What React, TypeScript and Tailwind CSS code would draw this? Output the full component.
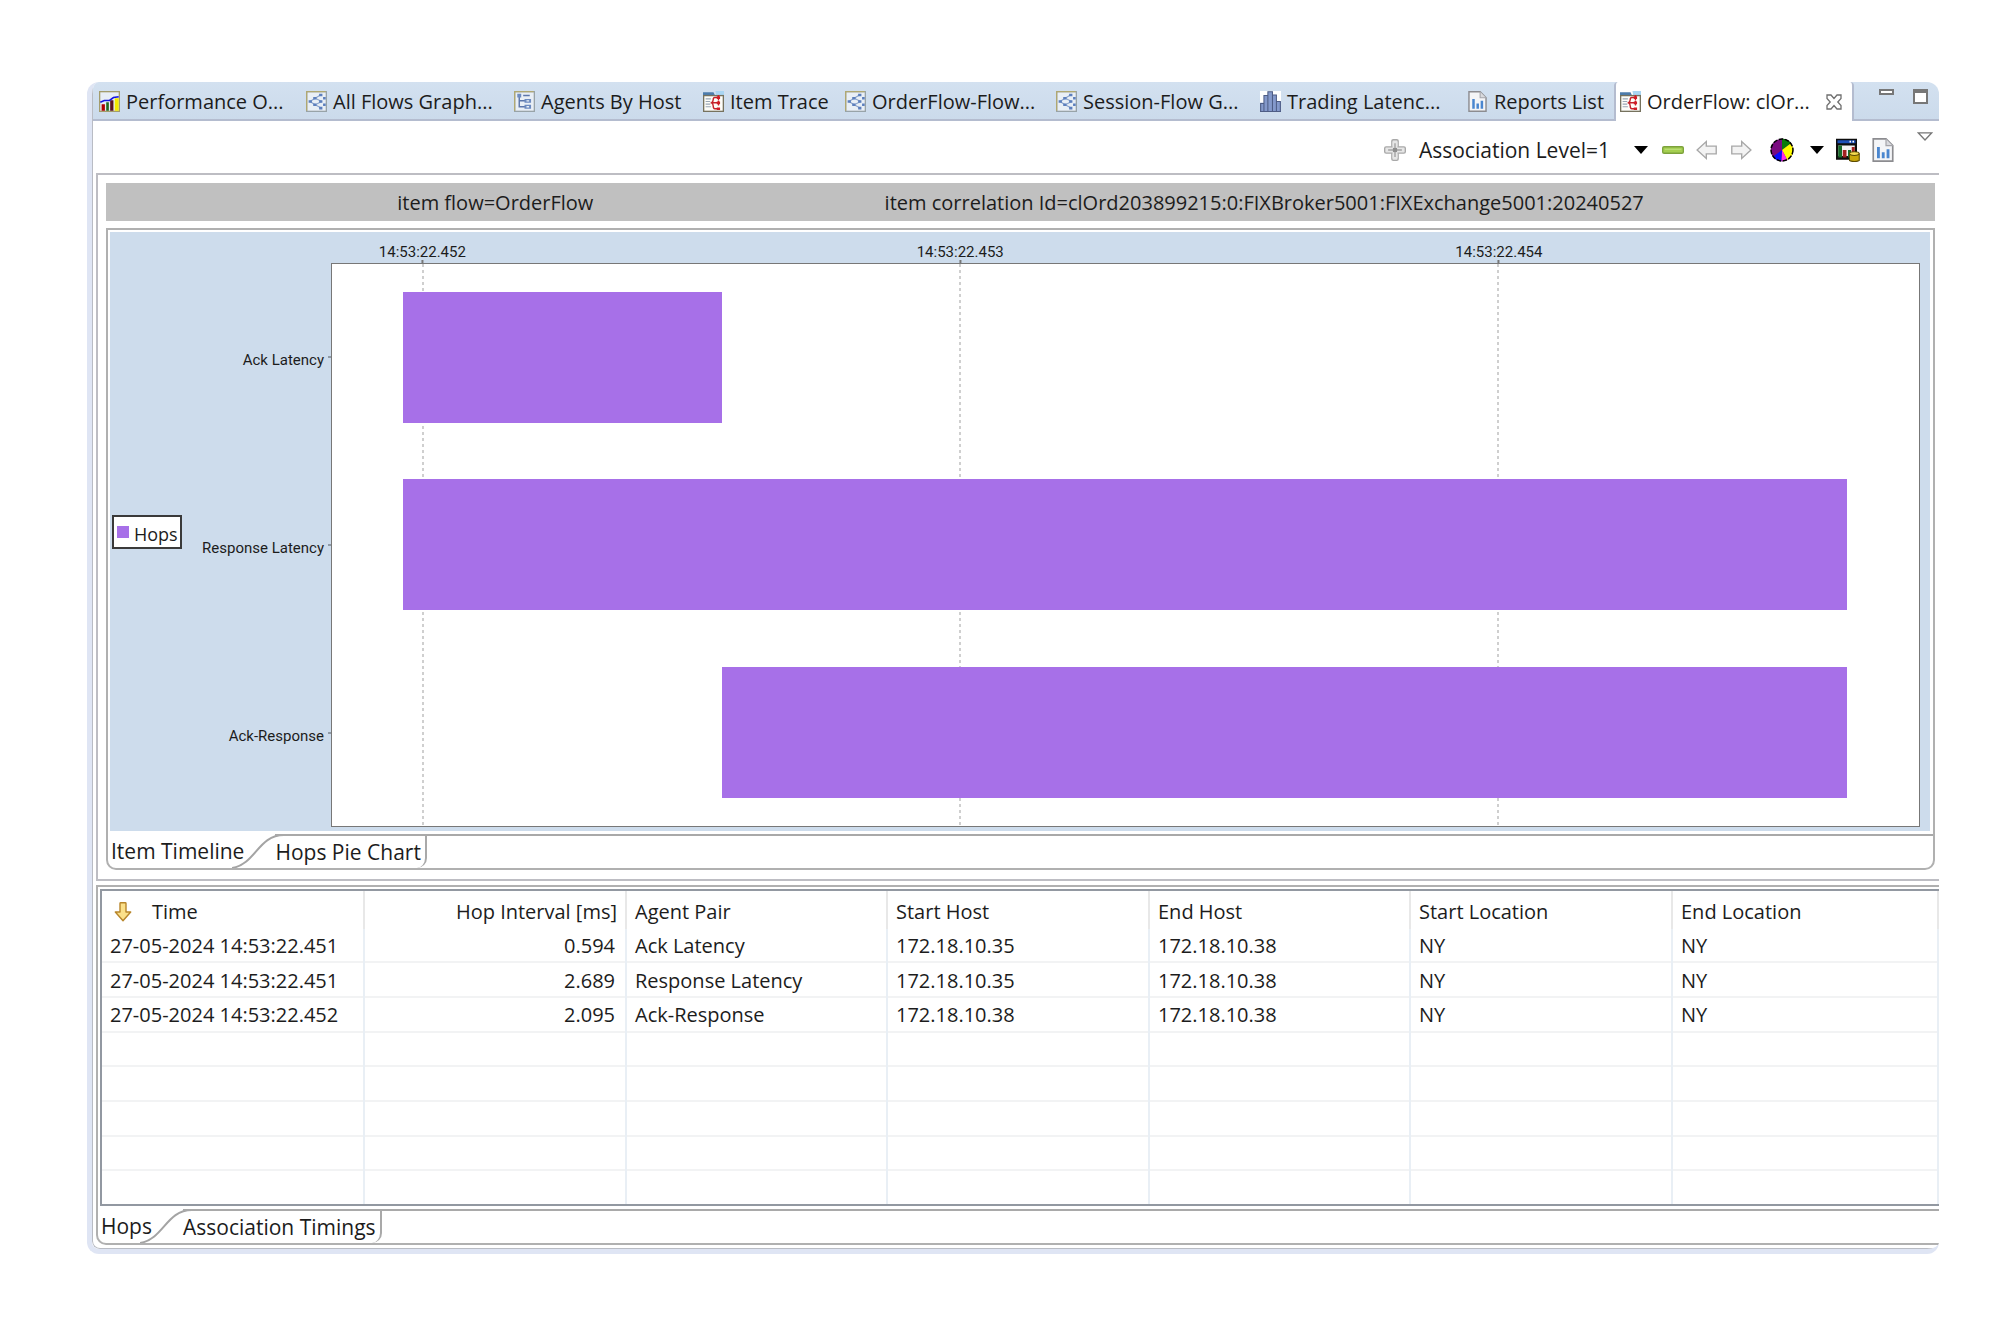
import React, { useState } from 'react';

type IconProps = { className?: string };

const PerformanceIcon: React.FC<IconProps> = ({ className }) => (
  <svg viewBox="0 0 16 16" className={className}>
    <rect x="0.5" y="0.5" width="15" height="15" fill="#e8eef6" stroke="#a39c6c" />
    <path d="M2 10h2.5v5H2z" fill="#b00000" />
    <path d="M5.5 8.5h2v6.5h-2z" fill="#1f6a1f" />
    <path d="M8.5 7H11v8H8.5z" fill="#5a1020" />
    <path d="M12 5.5h3V15h-3z" fill="#f4e800" />
    <path d="M1 8.5L4 7.2h4L11 5l4-.6" fill="none" stroke="#1414e0" strokeWidth="1.2" />
  </svg>
);

const FlowGraphIcon: React.FC<IconProps> = ({ className }) => (
  <svg viewBox="0 0 16 16" className={className}>
    <rect x="0.5" y="0.5" width="15" height="15" fill="#e9eff6" stroke="#98a3a8" />
    <path d="M0.5 15V0.5H15" fill="none" stroke="#b0a872" />
    <path d="M3 8l4-2.5L11 3M3 8l4 2.5 4.5 2.5M7 5.5L12 8M7 10.5L12 8" fill="none" stroke="#8ba3cb" strokeWidth="0.8" />
    <path
      d="M2 7h2.5v2H2zM5.5 4.5H8v2H5.5zM5.5 9.5H8v2H5.5zM10 2h2.5v2H10zM10 7h2.5v2H10zM10 12h2.5v2H10zM13 4.5h2v2h-2zM13 9.5h2v2h-2z"
      fill="#5c7fbd"
    />
  </svg>
);

const HostTreeIcon: React.FC<IconProps> = ({ className }) => (
  <svg viewBox="0 0 16 16" className={className}>
    <rect x="0.5" y="0.5" width="15" height="15" fill="#e9eff6" stroke="#98a3a8" />
    <path d="M0.5 15V0.5H15" fill="none" stroke="#b0a872" />
    <path d="M4 4v8h5M4 7.5h5M7 3.5h5" fill="none" stroke="#5c76aa" strokeWidth="1.1" />
    <path d="M2.5 2h3v3h-3zM8 6h5v3H8zM8 10.5h5v3H8z" fill="#6d8bc0" />
    <path d="M9.5 7h2v1h-2zM9.5 11.5h2v1h-2z" fill="#e9eff6" />
  </svg>
);

const TraceIcon: React.FC<IconProps> = ({ className }) => (
  <svg viewBox="0 0 16 16" className={className}>
    <path d="M0 1h8l1 2h7v13H0z" fill="#4d7cab" />
    <path d="M9.5 0H16v3h-6z" fill="#a9d5f2" />
    <rect x="0.5" y="3.5" width="15" height="12" fill="#fdfdf8" stroke="#76725e" />
    <path d="M2 6h4M2 8h3.5M2 10h3.5M2 12h4" stroke="#9aa7b5" strokeWidth="0.9" />
    <path d="M12 5H9q-1.200 0-1.200 1.500T6.500 9Q7.800 9.500 7.800 11.500T9 13.500h3M7 9h5" fill="none" stroke="#c5222a" strokeWidth="1.1" />
    <path d="M10.500 4h2.500v2h-2.500zM10.500 8h2.500v2h-2.500zM10.500 12.500h2.500v2h-2.500zM11.300 3h1v4h-1zM11.300 7.500h1v3.500h-1z" fill="#cf1d26" />
  </svg>
);

const HistogramIcon: React.FC<IconProps> = ({ className }) => (
  <svg viewBox="0 0 16 16" className={className}>
    <rect width="16" height="16" fill="#fff" />
    <path d="M0 9h3V3h3V0.5h3.5V3h3v5H16v8H0z" fill="#8499cb" />
    <path
      d="M0.5 16V9.500H3V3.5h3v-3h3.5V3h3v5h3v8M3 9v7M6 3v13M9.5 3v13M12.5 8v8M0 15.6h16"
      fill="none"
      stroke="#4e5d85"
      strokeWidth="0.8"
    />
  </svg>
);

const ReportIcon: React.FC<IconProps> = ({ className }) => (
  <svg viewBox="0 0 16 16" className={className}>
    <path d="M1.500 0.600H10l4.500 4.500v10.300h-13z" fill="#f4f5f7" stroke="#8c8c90" strokeWidth="1.1" />
    <path d="M10 0.600v4.500h4.500" fill="#d9dade" stroke="#a5a5aa" strokeWidth="0.8" />
    <path d="M4 6h1.900v7.500H4zM7.200 9.500h1.900v4H7.200zM10.400 7.500h1.900v6h-1.900z" fill="#4a86cf" />
  </svg>
);

const CloseIcon: React.FC<IconProps> = ({ className }) => (
  <svg viewBox="0 0 16 16" className={className}>
    <path
      d="M1 1h4l3 3.500L11 1h4v3.500L11.800 8l3.200 3.500V15h-4l-3-3.500L5 15H1v-3.500L4.200 8 1 4.500z"
      fill="#fff"
      stroke="#6f6f6f"
      strokeWidth="1.3"
    />
  </svg>
);

const AddIcon: React.FC<IconProps> = ({ className }) => (
  <svg viewBox="0 0 16 16" className={className}>
    <rect x="5.700" y="0.500" width="4.600" height="15" rx="1" fill="#e6e6e6" stroke="#a9a9a9" />
    <rect x="0.500" y="5.700" width="15" height="4.600" rx="1" fill="#e6e6e6" stroke="#a9a9a9" />
    <path d="M6.200 2h3.600v12H6.200z" fill="#e6e6e6" />
    <path d="M8 3v10M3 8h10" stroke="#a2a2a2" />
    <rect x="6.500" y="6.500" width="3" height="3" fill="#8f8f8f" />
  </svg>
);

const RemoveIcon: React.FC<IconProps> = ({ className }) => (
  <svg viewBox="0 0 16 16" className={className}>
    <rect x="0.5" y="5.600" width="15" height="4.800" rx="1" fill="#a5cf50" stroke="#7da23c" />
    <path d="M2 7.500h12" stroke="#b9dc74" />
  </svg>
);

const ArrowIcon: React.FC<IconProps> = ({ className }) => (
  <svg viewBox="0 0 16 16" className={className}>
    <path d="M0.800 8l6.700-6.200v3.400h7.200v5.600H7.500v3.400z" fill="#f3f3f3" stroke="#a8a8a8" />
  </svg>
);

const PieIcon: React.FC<IconProps> = ({ className }) => (
  <svg viewBox="0 0 16 16" className={className}>
    <circle cx="8" cy="8" r="7.500" fill="#7a0a80" />
    <path d="M8 8V0.500a7.500 7.500 0 0 1 6 3z" fill="#0a7d0a" />
    <path d="M8 8l6-4.500a7.500 7.500 0 0 1-2.500 11.100z" fill="#ffff00" />
    <path d="M8 8l3.500 6.600a7.500 7.500 0 0 1-4 .9z" fill="#ff2ce8" />
    <path d="M8 8l-.5 7.500a7.500 7.500 0 0 1-5.500-3z" fill="#0c0cff" />
    <circle cx="8" cy="8" r="7.300" fill="none" stroke="#000" strokeDasharray="3 1" />
  </svg>
);

const ChartDbIcon: React.FC<IconProps> = ({ className }) => (
  <svg viewBox="0 0 16 16" className={className}>
    <rect y="0.500" width="14" height="14" fill="#0d0d0d" />
    <rect x="1" y="1.500" width="12" height="2" fill="#1c50b8" />
    <path d="M9 1.800h1V3H9zM11 1.800h1V3h-1z" fill="#fff" />
    <path d="M1.500 5h11v7h-11z" fill="#f3f3f3" />
    <path d="M1.500 5H4v8H1.500zM8 8h2v5H8z" fill="#186a2a" />
    <path d="M4.500 8H7v5H4.500zM10.500 6h2v5h-2z" fill="#a32020" />
    <path d="M9 10.500h6.500V15q-3.200 1.500-6.500 0z" fill="#c9a80c" stroke="#5d4c00" strokeWidth="0.7" />
    <ellipse cx="12.200" cy="10.400" rx="3.200" ry="1.200" fill="#f4dc50" stroke="#5d4c00" strokeWidth="0.7" />
  </svg>
);

const SortIcon: React.FC<IconProps> = ({ className }) => (
  <svg viewBox="0 0 18 20" className={className}>
    <path
      d="M6 1.500q0-.7.7-.7h4.600q.7 0 .7.700V10h4.700L9 18.800 1.300 10H6z"
      fill="#fbe08a"
      stroke="#b8862b"
      strokeWidth="1.4"
      strokeLinejoin="round"
    />
  </svg>
);

const Caret: React.FC = () => (
  <svg viewBox="0 0 14 8" className="w-[14px] h-2">
    <path d="M0 0h14L7 8z" fill="#000" />
  </svg>
);

const editorTabs = [
  { label: 'Performance O...', Icon: PerformanceIcon, width: 'w-[207px]' },
  { label: 'All Flows Graph...', Icon: FlowGraphIcon, width: 'w-[208px]' },
  { label: 'Agents By Host', Icon: HostTreeIcon, width: 'w-[189px]' },
  { label: 'Item Trace', Icon: TraceIcon, width: 'w-[142px]' },
  { label: 'OrderFlow-Flow...', Icon: FlowGraphIcon, width: 'w-[211px]' },
  { label: 'Session-Flow G...', Icon: FlowGraphIcon, width: 'w-[204px]' },
  { label: 'Trading Latenc...', Icon: HistogramIcon, width: 'w-[207px]' },
  { label: 'Reports List', Icon: ReportIcon, width: 'w-[147px]' },
];

// positions are percentages of the plot width
const ticks = [
  { label: '14:53:22.452', at: 5.75 },
  { label: '14:53:22.453', at: 39.6 },
  { label: '14:53:22.454', at: 73.5 },
];

const bars = [
  { label: 'Ack Latency', start: 4.45, end: 24.55 },
  { label: 'Response Latency', start: 4.45, end: 95.45 },
  { label: 'Ack-Response', start: 24.55, end: 95.45 },
];

const hops = [
  ['27-05-2024 14:53:22.451', '0.594', 'Ack Latency', '172.18.10.35', '172.18.10.38', 'NY', 'NY'],
  ['27-05-2024 14:53:22.451', '2.689', 'Response Latency', '172.18.10.35', '172.18.10.38', 'NY', 'NY'],
  ['27-05-2024 14:53:22.452', '2.095', 'Ack-Response', '172.18.10.38', '172.18.10.38', 'NY', 'NY'],
];

const columns = ['Time', 'Hop Interval [ms]', 'Agent Pair', 'Start Host', 'End Host', 'Start Location', 'End Location'];
const EMPTY_ROWS = 5;

const EditorTabs: React.FC = () => (
  <div className="h-[39px] flex bg-linear-to-b from-[#d3e1f0] to-[#cbdaeb]">
    <div className="flex items-center pl-[6px] pt-[2px] border-b-2 border-[#b4bccf]">
      {editorTabs.map(({ label, Icon, width }) => (
        <button key={label} className={`${width} h-full flex items-center gap-[6px] whitespace-nowrap`}>
          <Icon className="w-[21px] h-[21px] shrink-0" />
          {label}
        </button>
      ))}
    </div>
    <div className="w-[240px] shrink-0 flex items-center bg-white border-x-2 border-[#b4bccf] rounded-t-[4px] pl-[4px] pr-[10px]">
      <button className="flex-1 h-full flex items-center gap-[6px] whitespace-nowrap">
        <TraceIcon className="w-[21px] h-[21px] shrink-0" />
        OrderFlow: clOr...
      </button>
      <button aria-label="Close tab">
        <CloseIcon className="w-[16px] h-[16px]" />
      </button>
    </div>
    <div className="flex-1 flex justify-end items-start gap-[19px] pt-[7px] pr-[11px] border-b-2 border-[#b4bccf]">
      <button aria-label="Minimize" className="w-[15px] h-[6px] bg-white border-2 border-[#777]" />
      <button aria-label="Maximize" className="w-[15px] h-[15px] bg-white border-2 border-t-4 border-[#777]" />
    </div>
  </div>
);

const Toolbar: React.FC = () => (
  <div className="h-[52px] flex justify-end items-center pt-[5px] pr-[6px]">
    <button className="flex items-center gap-[13px] text-[21px] whitespace-nowrap">
      <AddIcon className="w-[22px] h-[22px]" />
      Association Level=1
    </button>
    <button aria-label="Association levels" className="ml-6 mr-[14px]">
      <Caret />
    </button>
    <button aria-label="Remove level" className="mr-3">
      <RemoveIcon className="w-[22px] h-[22px]" />
    </button>
    <button aria-label="Back" className="mr-3">
      <ArrowIcon className="w-[22px] h-[22px]" />
    </button>
    <button aria-label="Forward" className="mr-[18px]">
      <ArrowIcon className="w-[22px] h-[22px] rotate-180" />
    </button>
    <button aria-label="Chart type">
      <PieIcon className="w-6 h-6" />
    </button>
    <button aria-label="Chart types" className="ml-4 mr-3">
      <Caret />
    </button>
    <button aria-label="Chart data" className="mr-[11px]">
      <ChartDbIcon className="w-6 h-6" />
    </button>
    <button aria-label="Create report" className="mr-[22px]">
      <ReportIcon className="w-6 h-6" />
    </button>
    <button aria-label="View menu" className="self-start pt-[6px]">
      <svg viewBox="0 0 16 9" className="w-4 h-[9px]">
        <path d="M1.200 0.800h13.600L8 8z" fill="#fff" stroke="#777" strokeWidth="1.3" />
      </svg>
    </button>
  </div>
);

const Timeline: React.FC = () => (
  <div className="flex h-[599px] ml-[2px] mr-[3px] mt-[2px] mb-[3px] bg-[#cddcec] pr-[10px] pb-1 leading-4 font-['Roboto','Liberation_Sans',sans-serif] text-[15px]">
    <div className="w-[75px] flex items-center pl-[2px] pt-1">
      <div className="flex items-center gap-[5px] h-[34px] w-[70px] pl-[3px] bg-white border-2 border-[#3a3a3a] text-lg leading-5 font-['Open_Sans','Noto_Sans',sans-serif]">
        <span className="w-3 h-3 bg-[#a770e8]" />
        <span className="pt-1">Hops</span>
      </div>
    </div>
    <div className="w-[146px] flex flex-col pt-[31px]">
      {bars.map((bar) => (
        <div key={bar.label} className="flex-1 flex items-center justify-end gap-1 whitespace-nowrap">
          <span className="pt-[6px]">{bar.label}</span>
          <span className="w-[3px] h-[2px] bg-[#8f9aa6]" />
        </div>
      ))}
    </div>
    <div className="flex-1 flex flex-col">
      <div className="relative h-[31px] shrink-0">
        {ticks.map((tick) => (
          <div
            key={tick.label}
            className="absolute bottom-0 flex flex-col items-center -translate-x-1/2"
            style={{ left: `${tick.at}%` }}
          >
            {tick.label}
            <span className="w-[2px] h-[3px] bg-[#777]" />
          </div>
        ))}
      </div>
      <div className="relative flex-1 flex flex-col bg-white border border-[#777]">
        {ticks.map((tick) => (
          <div
            key={tick.label}
            className="absolute inset-y-0 w-[2px] -translate-x-1/2 bg-[repeating-linear-gradient(#cfcfcf_0_3px,transparent_3px_6px)]"
            style={{ left: `${tick.at}%` }}
          />
        ))}
        {bars.map((bar) => (
          <div key={bar.label} className="relative flex-1 flex items-center">
            <div
              className="h-[131px] bg-[#a770e8]"
              style={{ marginLeft: `${bar.start}%`, width: `${bar.end - bar.start}%` }}
            />
          </div>
        ))}
      </div>
    </div>
  </div>
);

interface BottomTabsProps {
  tabs: [string, string];
  active: number;
  onSelect: (index: number) => void;
}

const BottomTabs: React.FC<BottomTabsProps> = ({ tabs, active, onSelect }) => (
  <div role="tablist" className="flex h-[34px] text-[21px] whitespace-nowrap">
    <button role="tab" aria-selected={active === 0} className="pl-[3px]" onClick={() => onSelect(0)}>
      {tabs[0]}
    </button>
    <svg viewBox="0 0 52 34" className="w-[52px] h-[34px] -ml-[12px] -mr-[9px] shrink-0">
      <path d="M0 34C24 30 26 1 52 1" fill="none" stroke="#a4a4a4" strokeWidth="2" />
    </svg>
    <button
      role="tab"
      aria-selected={active === 1}
      className="pr-1 border-t-2 border-r-2 border-[#a9a9a9] rounded-br-[10px]"
      onClick={() => onSelect(1)}
    >
      {tabs[1]}
    </button>
    <div className="flex-1 border-t-2 border-[#a9a9a9]" />
  </div>
);

const HopsTable: React.FC = () => (
  <div className="ml-[2px] mt-[2px] mb-[3px] border-2 border-r-0 border-[#9298a1]">
    <table className="w-full h-[313px] table-fixed border-collapse text-left whitespace-nowrap">
      <colgroup>
        <col className="w-[262px]" />
        <col className="w-[262px]" />
        <col className="w-[261px]" />
        <col className="w-[262px]" />
        <col className="w-[261px]" />
        <col className="w-[262px]" />
        <col />
      </colgroup>
      <thead>
        <tr className="h-[38px]">
          {columns.map((column, i) => (
            <th
              key={column}
              className={`font-normal pt-[3px] px-2 border-r-2 border-[#e8e8e8] ${i === 1 ? 'text-right' : ''}`}
            >
              {i === 0 ? (
                <span className="flex items-center gap-5 pl-1">
                  <SortIcon className="w-[18px] h-5" />
                  {column}
                </span>
              ) : (
                column
              )}
            </th>
          ))}
        </tr>
      </thead>
      <tbody>
        {hops.map((hop, row) => (
          <tr key={row} className="border-b-2 border-[#f2f3f4]">
            {hop.map((value, i) => (
              <td
                key={i}
                className={`pt-[2px] border-r-2 border-r-[#e9eff5] ${i === 1 ? 'pr-[10px] text-right' : 'px-2'}`}
              >
                {value}
              </td>
            ))}
          </tr>
        ))}
        {Array.from({ length: EMPTY_ROWS }, (_, row) => (
          <tr key={row} className="border-b-2 border-[#f2f3f4] last:border-b-0">
            {columns.map((column) => (
              <td key={column} className="pt-[2px] border-r-2 border-r-[#e9eff5]">
                &nbsp;
              </td>
            ))}
          </tr>
        ))}
      </tbody>
    </table>
  </div>
);

export default function App() {
  const [chartTab, setChartTab] = useState(0);
  const [tableTab, setTableTab] = useState(0);

  return (
    <div className="min-h-screen bg-white pt-[82px] pl-[87px] pr-[61px] text-[20px] leading-6 text-[#1c1c1c] font-['Open_Sans','Noto_Sans',sans-serif]">
      <div className="border-l-[5px] border-b-[5px] border-[#dfe5f4] rounded-[12px] overflow-hidden">
        <div className="border-l border-b border-[#b9bcc4] rounded-bl-[8px]">
          <EditorTabs />
          <Toolbar />
          <div className="ml-[3px] mb-[3px]">
            <div className="border-2 border-r-0 border-[#bdbdc3] pt-2 pl-2 pr-1 pb-[9px]">
              <div className="h-[38px] flex items-center justify-evenly pt-[2px] bg-[#c0c0c0] whitespace-nowrap">
                <span>item flow=OrderFlow</span>
                <span>item correlation Id=clOrd203899215:0:FIXBroker5001:FIXExchange5001:20240527</span>
              </div>
              <div className="mt-[7px] border-2 border-[#b0b0b0] rounded-b-[10px]">
                <Timeline />
                <BottomTabs tabs={['Item Timeline', 'Hops Pie Chart']} active={chartTab} onSelect={setChartTab} />
              </div>
            </div>
            <div className="mt-1 border-2 border-r-0 border-[#b0b0b0] rounded-bl-[10px]">
              <HopsTable />
              <BottomTabs tabs={['Hops', 'Association Timings']} active={tableTab} onSelect={setTableTab} />
            </div>
          </div>
        </div>
      </div>
    </div>
  );
}
